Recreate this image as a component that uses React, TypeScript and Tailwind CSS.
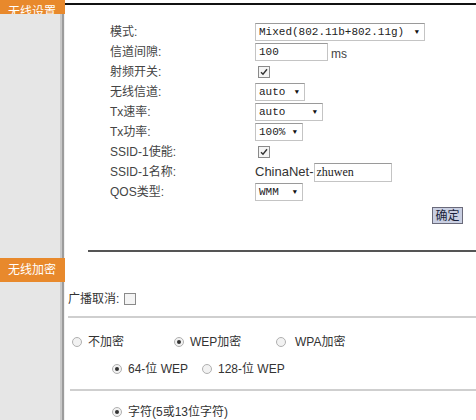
import React from "react";

const cjk = "font-['Liberation_Sans','Noto_Sans_CJK_SC',sans-serif]";
const mono = "font-['Liberation_Mono','Noto_Sans_CJK_SC',monospace]";

function Select({ value, width }: { value: string; width: string }) {
  return (
    <div
      className={`${width} h-[18px] flex items-center justify-between border border-[#c4c4c4] border-t-[#9a9a9a] bg-white pl-[3px] pr-[5px] ${mono} text-[11px] text-[#222]`}
    >
      <span>{value}</span>
      <span className="text-[7px] leading-none text-[#111]">▼</span>
    </div>
  );
}

function Check({ checked }: { checked?: boolean }) {
  return (
    <div className="w-[12px] h-[12px] ml-[3px] border border-[#8a8a8a] bg-[#f4f4f4] flex items-center justify-center">
      {checked && (
        <svg width="8" height="8" viewBox="0 0 8 8">
          <path d="M1 4.2 L3 6.3 L7 1.3" stroke="#333" strokeWidth="1.4" fill="none" />
        </svg>
      )}
    </div>
  );
}

function Radio({ on }: { on?: boolean }) {
  return (
    <div className="w-[10px] h-[10px] rounded-full border border-[#b0b0b0] bg-[#f2f2f2] flex items-center justify-center">
      {on && <div className="w-[4px] h-[4px] rounded-full bg-[#333]" />}
    </div>
  );
}

const rows: { label: string; control: React.ReactNode }[] = [
  { label: "模式:", control: <Select value="Mixed(802.11b+802.11g)" width="w-[170px]" /> },
  {
    label: "信道间隙:",
    control: (
      <div className="flex items-end">
        <div className={`w-[73px] h-[18px] border border-[#c4c4c4] border-t-[#9a9a9a] pl-[3px] ${mono} text-[11px] leading-[16px] text-[#222]`}>100</div>
        <span className={`ml-[3px] ${cjk} text-[12px] text-[#444] leading-[14px]`}>ms</span>
      </div>
    ),
  },
  { label: "射频开关:", control: <Check checked /> },
  { label: "无线信道:", control: <Select value="auto" width="w-[50px]" /> },
  { label: "Tx速率:", control: <Select value="auto" width="w-[68px]" /> },
  { label: "Tx功率:", control: <Select value="100%" width="w-[48px]" /> },
  { label: "SSID-1使能:", control: <Check checked /> },
  {
    label: "SSID-1名称:",
    control: (
      <div className="flex items-center">
        <span className={`${cjk} text-[13px] text-[#333]`}>ChinaNet-</span>
        <div className="w-[78px] h-[19px] border border-[#c4c4c4] border-t-[#9a9a9a] pl-[2px] font-['Liberation_Serif',serif] text-[12px] leading-[17px] text-[#222]">zhuwen</div>
      </div>
    ),
  },
  { label: "QOS类型:", control: <Select value="WMM" width="w-[48px]" /> },
];

function SideSeg({ h }: { h: string }) {
  return (
    <div className={`flex ${h}`}>
      <div className="w-[60px] bg-[#e6e6e6]" />
      <div className="w-[2px] bg-[#c8c8c8]" />
      <div className="w-[2px] bg-[#9c9c9c]" />
      <div className="w-[1px] bg-[#f0f0f0]" />
    </div>
  );
}

export default function App() {
  return (
    <div className="w-[476px] h-[420px] overflow-hidden bg-white flex text-[#333]">
      {/* sidebar */}
      <div className="w-[65px] flex flex-col shrink-0">
        <div className={`h-[14px] bg-[#e8892c] text-white text-[12px] ${cjk} overflow-hidden pl-[8px] leading-[12px] flex items-end pb-[2px]`}>
          <span className="-mb-[6px]">无线设置</span>
        </div>
        <SideSeg h="h-[244px]" />
        <div className={`h-[24px] bg-[#e8892c] text-white text-[12px] ${cjk} pl-[8px] flex items-center`}>无线加密</div>
        <SideSeg h="flex-1" />
      </div>

      {/* main */}
      <div className="flex-1 flex flex-col">
        <div className="mt-[3px] h-[2px] bg-[#111]" />
        <div className="mt-[17px] pl-[45px] flex flex-col">
          {rows.map((r) => (
            <div key={r.label} className="h-[20px] flex items-center">
              <div className={`w-[145px] ${cjk} text-[12px] text-[#444]`}>{r.label}</div>
              {r.control}
            </div>
          ))}
        </div>
        <div className="flex justify-end pr-[13px] mt-[5px]">
          <div className={`w-[31px] h-[17px] border border-[#6a6a7a] bg-[#c9cfe2] ${cjk} text-[12px] text-[#1a1f3a] flex items-center justify-center`}>确定</div>
        </div>
        <div className="mt-[26px] ml-[23px] h-[2px] bg-[#555]" />

        <div className="mt-[40px] ml-[3px] flex items-center h-[14px]">
          <span className={`${cjk} text-[12px] text-[#333]`}>广播取消:</span>
          <div className="ml-[2px]">
            <Check />
          </div>
        </div>
        <div className="mt-[10px] ml-[3px] h-[2px] bg-[#cfcfcf]" />

        <div className={`mt-[17px] h-[14px] flex items-center ${cjk} text-[12px] text-[#333]`}>
          <div className="ml-[7px] flex items-center gap-[6px] w-[102px]">
            <Radio />
            <span>不加密</span>
          </div>
          <div className="flex items-center gap-[6px] w-[102px]">
            <Radio on />
            <span>WEP加密</span>
          </div>
          <div className="flex items-center gap-[9px]">
            <Radio />
            <span>WPA加密</span>
          </div>
        </div>

        <div className={`mt-[13px] h-[14px] flex items-center ${cjk} text-[12px] text-[#333] pl-[47px]`}>
          <div className="flex items-center gap-[6px] w-[90px]">
            <Radio on />
            <span>64-位 WEP</span>
          </div>
          <div className="flex items-center gap-[6px]">
            <Radio />
            <span>128-位 WEP</span>
          </div>
        </div>
        <div className="mt-[13px] ml-[5px] h-[2px] bg-[#cfcfcf]" />

        <div className={`mt-[14px] h-[14px] flex items-center ${cjk} text-[12px] text-[#333] pl-[47px]`}>
          <div className="flex items-center gap-[6px]">
            <Radio on />
            <span>字符(5或13位字符)</span>
          </div>
        </div>
      </div>
    </div>
  );
}
